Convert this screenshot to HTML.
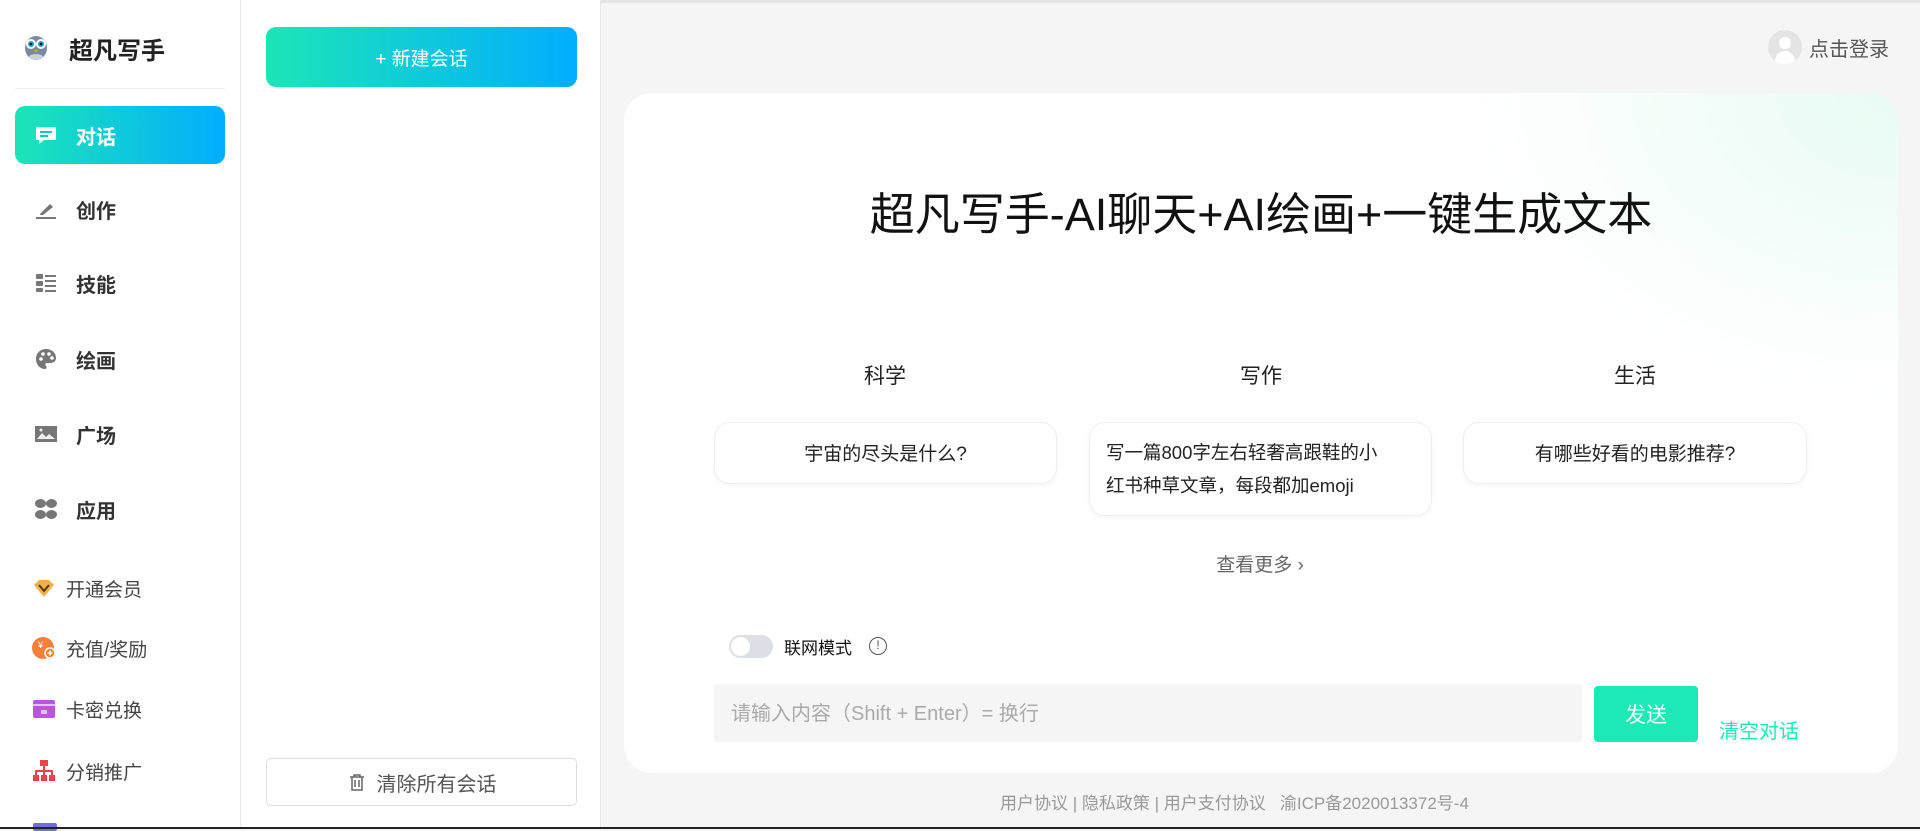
<!DOCTYPE html>
<html><head><meta charset="utf-8"><style>
*{margin:0;padding:0;box-sizing:border-box}
body{width:1920px;height:829px;overflow:hidden;background:#f5f5f5;font-family:"Liberation Sans","Noto Sans CJK SC",sans-serif;position:relative;color:#333}
.abs{position:absolute}
#side{left:0;top:0;width:241px;height:829px;background:#fff;border-right:1px solid #e8e8e8}
#col2{left:241px;top:0;width:360px;height:829px;background:#fff;border-right:1px solid #e8e8e8}
.topline{left:0;top:0;width:1920px;height:3px;background:#e6e6e6}
.menu{left:15px;width:210px;height:58px;border-radius:10px;display:flex;align-items:center;padding-left:19px;font-size:20px;font-weight:bold;color:#333}
.menu svg{width:24px;height:24px;margin-right:18px;flex-shrink:0}
.sub{left:32px;display:flex;align-items:center;font-size:19px;color:#444;height:30px}
.sub svg{width:24px;height:24px;margin-right:10px;flex-shrink:0}
.grad{background:linear-gradient(90deg,#1de5b7,#00aeff)}
.card{background:#fff;border:1px solid #eee;border-radius:16px;box-shadow:0 2px 6px rgba(0,0,0,.04);font-size:19px;color:#222}
</style></head><body>
<div class="abs topline"></div>
<div id="side" class="abs">
  <svg class="abs" style="left:20px;top:30px" width="32" height="32" viewBox="0 0 32 32"><ellipse cx="16" cy="18" rx="11" ry="12" fill="#7a8aa0"/><circle cx="11" cy="14" r="5" fill="#fff"/><circle cx="21" cy="14" r="5" fill="#fff"/><circle cx="11" cy="14" r="3" fill="#1aa0e0"/><circle cx="21" cy="14" r="3" fill="#1aa0e0"/><circle cx="11" cy="14" r="1.3" fill="#111"/><circle cx="21" cy="14" r="1.3" fill="#111"/><path d="M14 20l2 3 2-3z" fill="#d8a040"/><ellipse cx="16" cy="27" rx="7" ry="3" fill="#c8d0dc"/></svg>
  <div class="abs" style="left:69px;top:31px;font-size:24px;font-weight:bold;color:#222">超凡写手</div>
  <div class="abs" style="left:15px;top:88px;width:210px;height:1px;background:#eee"></div>
  <div class="abs menu grad" style="top:106px;color:#fff"><svg viewBox="0 0 24 24"><path d="M3 4h18a1 1 0 0 1 1 1v11a1 1 0 0 1-1 1H10l-5 4v-4H3a1 1 0 0 1-1-1V5a1 1 0 0 1 1-1z" fill="#fff"/><rect x="6" y="8" width="12" height="2" fill="#14c8d0"/><rect x="6" y="12" width="8" height="2" fill="#14c8d0"/></svg>对话</div>
  <div class="abs menu" style="top:180px"><svg viewBox="0 0 24 24"><path d="M6 17l10-10 3 3-10 8H6z" fill="#777"/><rect x="2" y="20" width="20" height="2" fill="#777"/></svg>创作</div>
  <div class="abs menu" style="top:254px"><svg viewBox="0 0 24 24" fill="#777"><rect x="2" y="3" width="7" height="5" rx="1"/><rect x="2" y="10" width="7" height="5" rx="1"/><rect x="2" y="17" width="7" height="4" rx="1"/><rect x="11" y="4" width="11" height="2"/><rect x="11" y="9" width="11" height="2"/><rect x="11" y="14" width="11" height="2"/><rect x="11" y="19" width="11" height="2"/></svg>技能</div>
  <div class="abs menu" style="top:330px"><svg viewBox="0 0 24 24"><path d="M12 2C6 2 2 6.5 2 12s4 10 9 10c2 0 2-2 1-3s-1-3 1-3h3c4 0 6-2 6-5 0-5-4-9-10-9z" fill="#777"/><circle cx="7" cy="12" r="1.8" fill="#fff"/><circle cx="9" cy="7" r="1.8" fill="#fff"/><circle cx="15" cy="7" r="1.8" fill="#fff"/><circle cx="18" cy="11" r="1.8" fill="#fff"/></svg>绘画</div>
  <div class="abs menu" style="top:405px"><svg viewBox="0 0 24 24"><rect x="1" y="4" width="22" height="16" fill="#777"/><path d="M3 17l5-6 4 4 3-3 6 5z" fill="#eee"/><circle cx="7" cy="8" r="1.5" fill="#eee"/></svg>广场</div>
  <div class="abs menu" style="top:480px"><svg viewBox="0 0 24 24" fill="#777"><ellipse cx="6.5" cy="6.5" rx="5.5" ry="4.5"/><ellipse cx="17.5" cy="6.5" rx="5.5" ry="4.5"/><ellipse cx="6.5" cy="17.5" rx="5.5" ry="4.5"/><ellipse cx="17.5" cy="17.5" rx="5.5" ry="4.5"/></svg>应用</div>
  <div class="abs sub" style="top:573px"><svg viewBox="0 0 24 24"><path d="M2 9l5-5h10l5 5-10 12z" fill="#f0b050"/><path d="M7 9l5 6 5-6" stroke="#5a3a10" stroke-width="2" fill="none"/></svg>开通会员</div>
  <div class="abs sub" style="top:633px"><svg viewBox="0 0 24 24"><circle cx="11" cy="12" r="11" fill="#f77f3a"/><text x="6" y="12" font-size="9" fill="#fff" font-family="Liberation Sans">¥</text><circle cx="18" cy="17" r="5" fill="#f77f3a" stroke="#fff" stroke-width="1.5"/><path d="M15.5 17h5M18 14.5v5" stroke="#fff" stroke-width="1.5"/></svg>充值/奖励</div>
  <div class="abs sub" style="top:694px"><svg viewBox="0 0 24 24"><rect x="1" y="3" width="22" height="18" rx="2" fill="#b858d8"/><rect x="1" y="7" width="22" height="2" fill="#e7c0f0"/><path d="M9 14h6M9 16h6" stroke="#fff" stroke-width="1.2"/></svg>卡密兑换</div>
  <div class="abs sub" style="top:756px"><svg viewBox="0 0 24 24" fill="#f04050"><rect x="8" y="1" width="8" height="6"/><rect x="11" y="7" width="2" height="5"/><rect x="3" y="11" width="18" height="2"/><rect x="3" y="12" width="2" height="4"/><rect x="19" y="12" width="2" height="4"/><rect x="11" y="12" width="2" height="4"/><rect x="1" y="16" width="6" height="6"/><rect x="9" y="16" width="6" height="6"/><rect x="17" y="16" width="6" height="6"/></svg>分销推广</div>
  <div class="abs" style="left:33px;top:823px;width:24px;height:8px;background:#6f6fe0;border-radius:2px"></div>
</div>
<div id="col2" class="abs">
  <div class="abs grad" style="left:25px;top:27px;width:311px;height:60px;border-radius:10px;color:#fff;font-size:19px;display:flex;align-items:center;justify-content:center">+ 新建会话</div>
  <div class="abs" style="left:25px;top:758px;width:311px;height:48px;border-radius:5px;border:1px solid #ddd;background:#fff;color:#555;font-size:20px;display:flex;align-items:center;justify-content:center"><svg width="20" height="20" viewBox="0 0 20 20" style="margin-right:10px"><path d="M3 5h14M7 5V3h6v2M5 5v13h10V5M8 8v7M12 8v7" stroke="#666" stroke-width="1.5" fill="none"/></svg>清除所有会话</div>
</div>
<div class="abs" style="left:1768px;top:30px;width:34px;height:34px;border-radius:50%;background:#e4e4e4;overflow:hidden"><div class="abs" style="left:11px;top:7px;width:12px;height:12px;border-radius:50%;background:#fff"></div><div class="abs" style="left:7px;top:21px;width:20px;height:16px;border-radius:10px 10px 0 0;background:#fff"></div></div>
<div class="abs" style="left:1809px;top:33px;font-size:20px;color:#555">点击登录</div>
<div class="abs" style="left:624px;top:93px;width:1274px;height:680px;border-radius:28px;background:radial-gradient(ellipse 420px 300px at 100% 0%,#e8fbf4,rgba(255,255,255,0) 100%),#fff"></div>
<div class="abs" style="left:624px;top:178px;width:1274px;text-align:center;font-size:45px;color:#111">超凡写手-AI聊天+AI绘画+一键生成文本</div>
<div class="abs" style="left:800px;top:360px;width:170px;text-align:center;font-size:21px;color:#222">科学</div>
<div class="abs" style="left:1176px;top:360px;width:170px;text-align:center;font-size:21px;color:#222">写作</div>
<div class="abs" style="left:1550px;top:360px;width:170px;text-align:center;font-size:21px;color:#222">生活</div>
<div class="abs card" style="left:714px;top:422px;width:343px;height:62px;display:flex;align-items:center;justify-content:center;padding-bottom:2px">宇宙的尽头是什么?</div>
<div class="abs card" style="left:1089px;top:422px;width:343px;height:94px;padding:13px 0 0 16px;line-height:33px;white-space:nowrap;font-size:18.5px">写一篇800字左右轻奢高跟鞋的小<br>红书种草文章，每段都加emoji</div>
<div class="abs card" style="left:1463px;top:422px;width:344px;height:62px;display:flex;align-items:center;justify-content:center;padding-bottom:2px">有哪些好看的电影推荐?</div>
<div class="abs" style="left:1100px;top:550px;width:320px;text-align:center;font-size:19px;color:#666">查看更多 ›</div>
<div class="abs" style="left:729px;top:635px;width:44px;height:23px;border-radius:12px;background:#dcdfe6"><div class="abs" style="left:2px;top:2px;width:19px;height:19px;border-radius:50%;background:#fff"></div></div>
<div class="abs" style="left:784px;top:634px;font-size:17px;color:#111">联网模式</div>
<div class="abs" style="left:869px;top:637px;width:18px;height:18px;border-radius:50%;border:1.5px solid #555;font-size:12px;text-align:center;line-height:15px;color:#555">!</div>
<div class="abs" style="left:714px;top:684px;width:868px;height:58px;background:#f5f5f5;border-radius:3px;font-size:20px;color:#aaa;padding:13px 0 0 17px">请输入内容（Shift + Enter）= 换行</div>
<div class="abs" style="left:1594px;top:686px;width:104px;height:56px;border-radius:4px;background:#1de9b6;color:#fff;font-size:21px;display:flex;align-items:center;justify-content:center">发送</div>
<div class="abs" style="left:1719px;top:715px;font-size:20px;color:#1de9b6">清空对话</div>
<div class="abs" style="left:1000px;top:789px;font-size:17px;color:#999;white-space:nowrap">用户协议 | 隐私政策 | 用户支付协议 &nbsp; 渝ICP备2020013372号-4</div>
<div class="abs" style="left:0;top:827px;width:1920px;height:2px;background:#222"></div>
</body></html>
